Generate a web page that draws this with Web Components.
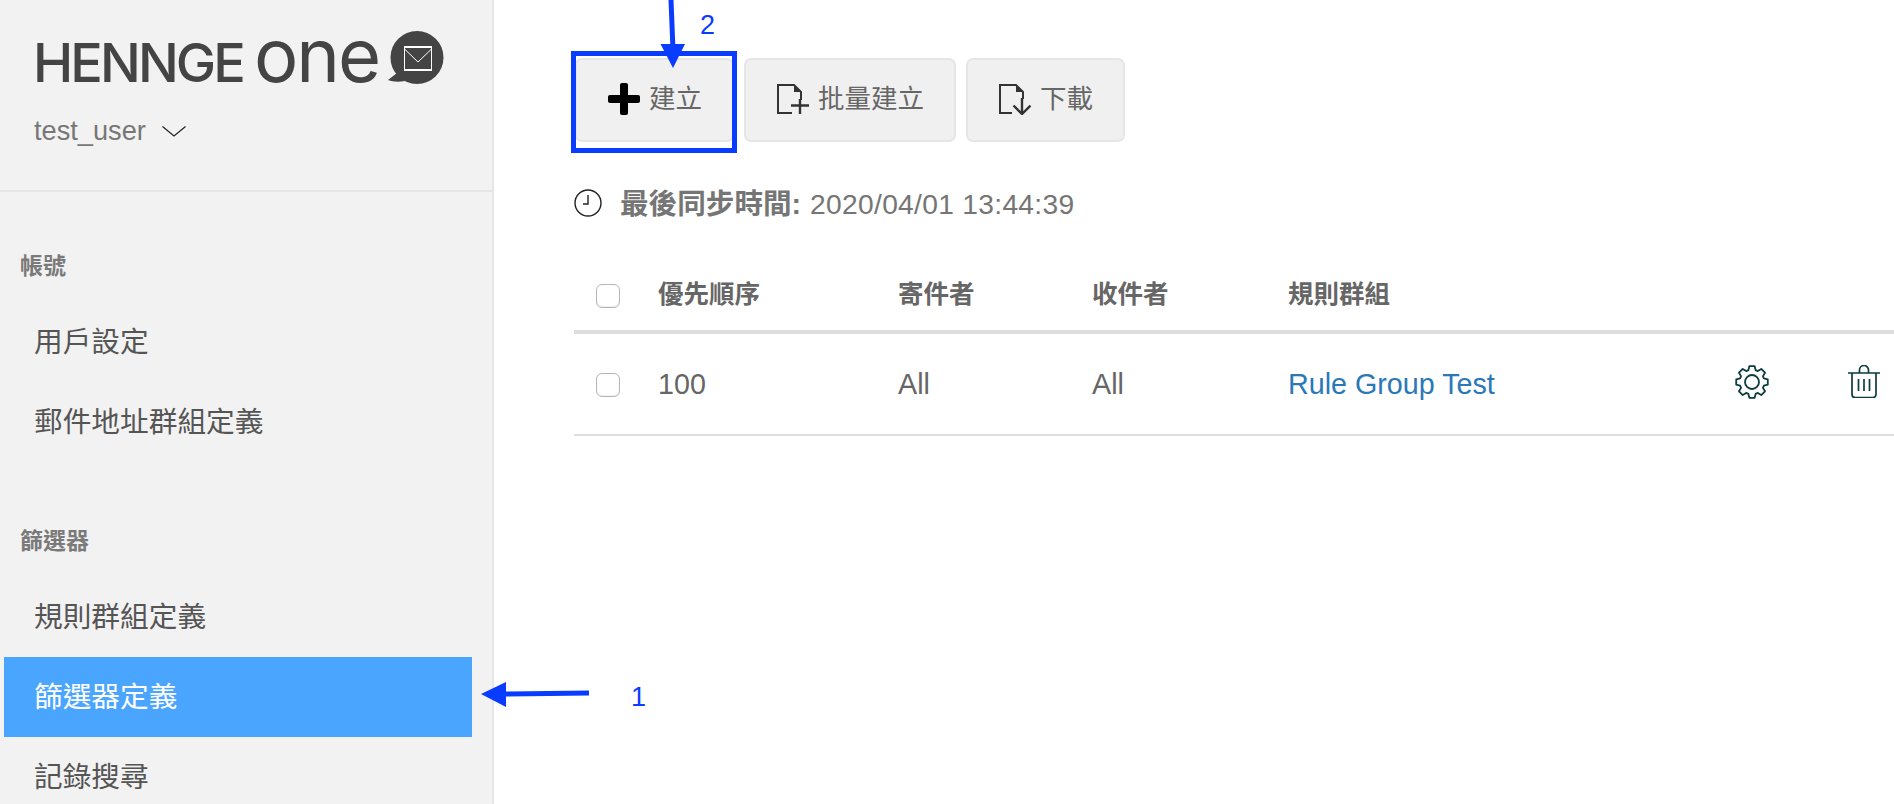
<!DOCTYPE html>
<html lang="zh-Hant">
<head>
<meta charset="utf-8">
<title>HENNGE One</title>
<style>
    html, body { margin: 0; height: 100%; overflow: hidden; background: #fff; }
    body { font-family: "Liberation Sans", "Noto Sans CJK TC", sans-serif; }
</style>
</head>
<body>
<hn-app>
    <hn-sidebar slot="side" user="test_user">
        <hn-nav-section label="帳號">
            <hn-nav-item>用戶設定</hn-nav-item>
            <hn-nav-item>郵件地址群組定義</hn-nav-item>
        </hn-nav-section>
        <hn-nav-section label="篩選器">
            <hn-nav-item>規則群組定義</hn-nav-item>
            <hn-nav-item active>篩選器定義</hn-nav-item>
            <hn-nav-item>記錄搜尋</hn-nav-item>
        </hn-nav-section>
    </hn-sidebar>
    <hn-toolbar>
        <hn-button icon="plus">建立</hn-button>
        <hn-button icon="fileplus">批量建立</hn-button>
        <hn-button icon="filedown">下載</hn-button>
    </hn-toolbar>
    <hn-sync-time label="最後同步時間:" time="2020/04/01 13:44:39"></hn-sync-time>
    <hn-table>
        <hn-table-row head>
            <span>優先順序</span><span>寄件者</span><span>收件者</span><span>規則群組</span>
        </hn-table-row>
        <hn-table-row actions>
            <span>100</span><span>All</span><span>All</span><a>Rule Group Test</a>
        </hn-table-row>
    </hn-table>
    <hn-annotations></hn-annotations>
</hn-app>

<script>
const BLUE = "#0a3cff";

const ICONS = {
    plus: `<rect x="12" y="0" width="8" height="32" rx="2" fill="#000"/>
           <rect x="0" y="12" width="32" height="8" rx="2" fill="#000"/>`,
    fileplus: `<path d="M15 30H1V2h16l7 7v8" fill="none" stroke="#333" stroke-width="2"/>
               <path d="M17 2l7 7h-7z" fill="#333"/>
               <path d="M23 16v15M14 22.5h18" fill="none" stroke="#333" stroke-width="2.4"/>`,
    filedown: `<path d="M13 30H1V2h16l7 7v7" fill="none" stroke="#333" stroke-width="2"/>
               <path d="M17 2l7 7h-7z" fill="#333"/>
               <path d="M23 15v16M14.5 22.5L23 31l8.5-8.5" fill="none" stroke="#333" stroke-width="2.4"/>`
};

// outline of a cog with n teeth, centred on 17,17
function gearPath(n, outer, inner)
{
    let pts = [];
    let step = 2 * Math.PI / n;
    for(let i = 0; i < n; i ++)
    {
        let a = i * step - Math.PI / 2;
        let offs = [[-0.30, inner], [-0.17, outer], [0.17, outer], [0.30, inner]];
        for(let o of offs)
        {
            let ang = a + o[0] * step * 1.25;
            pts.push((17 + Math.cos(ang) * o[1]).toFixed(2) + " " + (17 + Math.sin(ang) * o[1]).toFixed(2));
        }
    }
    return "M" + pts.join("L") + "Z";
}

class HnApp extends HTMLElement
{
    constructor()
    {
        super();
        this.attachShadow({ mode: "open" }).innerHTML = `
        <style>
            :host { display: grid; grid-template-columns: 494px 1fr; height: 804px; position: relative; overflow: hidden; }
            .main { padding: 58px 0 0 80px; min-width: 0; }
            ::slotted(hn-annotations) { position: absolute; inset: 0; }
        </style>
        <slot name="side"></slot>
        <div class="main"><slot></slot></div>`;
    }
}

class HnSidebar extends HTMLElement
{
    constructor()
    {
        super();
        let user = this.getAttribute("user") || "";
        this.attachShadow({ mode: "open" }).innerHTML = `
        <style>
            :host { display: block; background: #f2f2f2; border-right: 2px solid #e6e6e6; height: 804px; overflow: hidden; }
            .head { height: 192px; box-sizing: border-box; padding: 31px 0 0 33px; border-bottom: 2px solid #e6e6e6; }
            .logo { display: flex; align-items: baseline; height: 53px; color: #444; font-family: Inter, sans-serif; position: relative; }
            .hennge { font-size: 54px; font-weight: 500; letter-spacing: -2.9px; line-height: 48px; }
            .one { font-size: 74px; font-weight: 400; letter-spacing: -2px; margin-left: 11px; line-height: 48px; }
            .bubble { width: 58px; height: 54px; margin-left: 8px; align-self: flex-start; }
            .user { display: flex; align-items: center; gap: 16px; margin-top: 29px; padding-left: 1px; font-size: 27.2px; line-height: 36px; color: #777; }
        </style>
        <div class="head">
            <div class="logo">
                <span class="hennge">HENNGE</span><span class="one">one</span>
                <svg class="bubble" viewBox="0 0 58 54">
                    <circle cx="30" cy="26.5" r="26.5" fill="#444"/>
                    <path d="M1 49L10 42l8 8C12 51 6 51 1 49z" fill="#444"/>
                    <path d="M17 15h28v2H17zM17 38h28v2H17z" fill="#fff"/>
                    <path d="M17.5 17v21M44.5 17v21M17.5 18L31 31 44.5 18" fill="none" stroke="#fff" stroke-width="1"/>
                </svg>
            </div>
            <div class="user">${user}
                <svg width="24" height="11" viewBox="0 0 24 11"><path d="M0.5 0.5L12 10 23.5 0.5" fill="none" stroke="#222" stroke-width="1.2"/></svg>
            </div>
        </div>
        <slot></slot>`;
    }
}

class HnNavSection extends HTMLElement
{
    constructor()
    {
        super();
        let label = this.getAttribute("label") || "";
        this.attachShadow({ mode: "open" }).innerHTML = `
        <style>
            :host { display: block; margin-top: 54px; }
            :host(:last-of-type) { margin-top: 59px; }
            .label { height: 40px; line-height: 40px; padding-left: 20px; margin-bottom: 16px; font-size: 23px; font-weight: 700; color: #7a7a7a; }
        </style>
        <div class="label">${label}</div>
        <slot></slot>`;
    }
}

class HnNavItem extends HTMLElement
{
    constructor()
    {
        super();
        this.attachShadow({ mode: "open" }).innerHTML = `
        <style>
            :host { display: block; box-sizing: border-box; margin-left: 4px; width: 468px; height: 80px; line-height: 80px; padding-left: 30px; font-size: 28.7px; color: #555; }
            :host([active]) { background: #4aa5ff; color: #fff; }
        </style>
        <slot></slot>`;
    }
}

class HnToolbar extends HTMLElement
{
    constructor()
    {
        super();
        this.attachShadow({ mode: "open" }).innerHTML = `
        <style>
            :host { display: flex; gap: 10px; padding-left: 1px; }
        </style>
        <slot></slot>`;
    }
}

class HnButton extends HTMLElement
{
    constructor()
    {
        super();
        let icon = ICONS[this.getAttribute("icon")] || "";
        this.attachShadow({ mode: "open" }).innerHTML = `
        <style>
            :host { display: flex; align-items: center; gap: 9px; box-sizing: border-box; height: 84px; padding: 0 30px 0 31px; background: #f0f0f0; border: 2px solid #e6e6e6; border-radius: 7px; font-size: 26.5px; color: #666; }
            svg { flex: none; margin-top: -2px; }
            .t { padding-bottom: 7px; }
        </style>
        <svg width="32" height="32" viewBox="0 0 32 32">${icon}</svg>
        <span class="t"><slot></slot></span>`;
    }
}

class HnSyncTime extends HTMLElement
{
    constructor()
    {
        super();
        let label = this.getAttribute("label") || "";
        let time = this.getAttribute("time") || "";
        this.attachShadow({ mode: "open" }).innerHTML = `
        <style>
            :host { display: flex; align-items: baseline; height: 40px; margin-top: 39px; font-size: 28.2px; color: #757575; letter-spacing: 0.3px; }
            svg { flex: none; margin: 3px 18px 0 0; align-self: center; }
            b { margin-right: 9px; letter-spacing: 0; font-size: 28.6px; }
        </style>
        <svg width="28" height="28" viewBox="0 0 28 28">
            <circle cx="14" cy="14" r="13" fill="none" stroke="#222" stroke-width="1.4"/>
            <path d="M14 6v9H9" fill="none" stroke="#222" stroke-width="1.4"/>
        </svg>
        <b>${label}</b>${time}`;
    }
}

class HnTable extends HTMLElement
{
    constructor()
    {
        super();
        this.attachShadow({ mode: "open" }).innerHTML = `
        <style>
            :host { display: block; margin-top: 39px; }
        </style>
        <slot></slot>`;
    }
}

class HnTableRow extends HTMLElement
{
    constructor()
    {
        super();
        let actions = "";
        if(this.hasAttribute("actions"))
        {
            actions = `
            <svg class="gear" width="34" height="34" viewBox="0 0 34 34">
                <path d="${gearPath(8, 16, 12.4)}" fill="none" stroke="#0d3b3e" stroke-width="1.8" stroke-linejoin="round"/>
                <circle cx="17" cy="17" r="7" fill="none" stroke="#0d3b3e" stroke-width="1.8"/>
            </svg>
            <svg class="trash" width="32" height="33" viewBox="0 0 32 33">
                <path d="M0 8h32M11.5 8V5a4 4 0 0 1 9 0v3M4 8v21.5a3 3 0 0 0 3 3h18a3 3 0 0 0 3-3V8M10.5 14v12M16 14v12M21.5 14v12" fill="none" stroke="#0d3b3e" stroke-width="1.7"/>
            </svg>`;
        }
        this.attachShadow({ mode: "open" }).innerHTML = `
        <style>
            :host { display: grid; grid-template-columns: 84px 240px 194px 196px 1fr; align-items: center; box-sizing: border-box; height: 102px; border-bottom: 2px solid #ddd; font-size: 28.7px; color: #666; position: relative; }
            :host([head]) { height: 74px; border-bottom-width: 4px; font-size: 25.5px; font-weight: 700; }
            :host([head]) ::slotted(span) { padding-bottom: 7px; }
            .check { box-sizing: border-box; width: 24px; height: 24px; margin: 2px 0 0 22px; border: 1.5px solid #b5b5b5; border-radius: 6px; background: #fff; box-shadow: inset 0 -1px 1px #eee; }
            ::slotted(a) { color: #2a78b8; }
            .acts { position: absolute; inset: 0; pointer-events: none; }
            .gear { position: absolute; left: 1161px; top: 31px; }
            .trash { position: absolute; left: 1274px; top: 31px; }
        </style>
        <div class="check"></div>
        <slot></slot>
        <div class="acts">${actions}</div>`;
    }
}

// The numbered highlight marks that were drawn on top of the screenshot
class HnAnnotations extends HTMLElement
{
    constructor()
    {
        super();
        this.attachShadow({ mode: "open" }).innerHTML = `
        <style>
            :host { display: block; pointer-events: none; }
            .box { position: absolute; left: 571px; top: 51px; width: 166px; height: 102px; box-sizing: border-box; border: 5px solid ${BLUE}; }
            svg { position: absolute; left: 0; top: 0; }
            .num { position: absolute; font-size: 27px; line-height: 30px; color: ${BLUE}; }
        </style>
        <div class="box"></div>
        <svg width="800" height="804" viewBox="0 0 800 804">
            <path d="M671 0L673 50M589 693L500 694" fill="none" stroke="${BLUE}" stroke-width="5"/>
            <path d="M660.5 44H685L673 68zM481 694L506 682V707z" fill="${BLUE}"/>
        </svg>
        <span class="num" style="left:700px;top:10px">2</span>
        <span class="num" style="left:631px;top:682px">1</span>`;
    }
}

customElements.define("hn-app", HnApp);
customElements.define("hn-sidebar", HnSidebar);
customElements.define("hn-nav-section", HnNavSection);
customElements.define("hn-nav-item", HnNavItem);
customElements.define("hn-toolbar", HnToolbar);
customElements.define("hn-button", HnButton);
customElements.define("hn-sync-time", HnSyncTime);
customElements.define("hn-table", HnTable);
customElements.define("hn-table-row", HnTableRow);
customElements.define("hn-annotations", HnAnnotations);
</script>
</body>
</html>
